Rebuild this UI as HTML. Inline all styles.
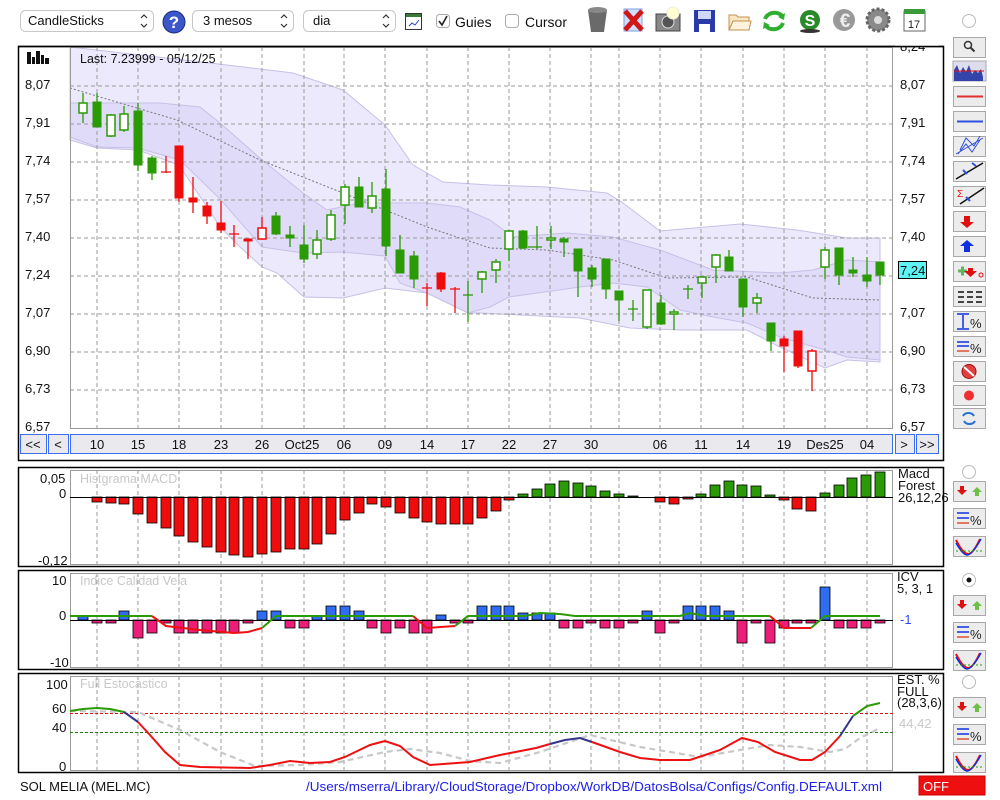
<!DOCTYPE html>
<html><head><meta charset="utf-8"><style>
html,body{margin:0;padding:0;background:#fff;width:1000px;height:800px;overflow:hidden}
svg{display:block;font-family:"Liberation Sans",Arial,sans-serif}
.gr{stroke:#9a9a9a;stroke-dasharray:4,3;stroke-width:1;fill:none}
.g{fill:#2a9a05;stroke:#2a9a05;stroke-width:1}
.h{fill:#fff;stroke:#2a9a05;stroke-width:1.5}
.r{fill:#ee0c0c;stroke:#ee0c0c;stroke-width:1}
.rh{fill:#fff;stroke:#ee0c0c;stroke-width:1.5}
.btn{fill:#ececec;stroke:#a8a8a8;stroke-width:1}
.ax{font-size:13px;fill:#111}
</style></head><body>
<svg width="1000" height="800" viewBox="0 0 1000 800" xmlns="http://www.w3.org/2000/svg">
<!-- MAIN PANEL -->
<rect x="18.5" y="46.5" width="925" height="414" fill="#fff" stroke="#000" stroke-width="1.5"/>
<polygon points="70,47 227,65 293,73 343,90 385,125 413,165 443,182 490,185 547,187 607,193 623,203 660,231 740,224 797,230 847,238 880,238 880,362 847,360 825,368 780,347 747,330 680,330 630,328 580,318 480,313 468,313 427,293 385,288 343,298 304,297 277,273 262,267 240,247 221,228 179,165 138,150 97,148 70,140" fill="#ece9fc" stroke="#c6c0e6"/>
<polygon points="70,103 160,103 200,107 220,123 262,160 303,193 327,210 360,203 427,203 460,207 490,220 513,237 567,233 613,237 660,250 713,270 780,273 813,270 847,260 880,262 880,360 847,357 825,350 780,337 747,323 713,317 680,310 647,287 613,283 580,287 509,297 490,307 468,313 427,293 400,283 385,256 343,252 303,253 262,247 221,200 180,160 138,148 97,147 70,137" fill="#e1dbfa" stroke="#c6c0e6"/>
<polyline points="70,88 177,120 260,160 343,193 427,227 490,248 547,250 613,260 667,278 747,277 797,293 813,298 880,300" fill="none" stroke="#777" stroke-dasharray="2,2"/>
<g class="gr">
<path d="M70 86H893M70 124H893M70 162H893M70 200H893M70 238H893M70 276H893M70 314H893M70 352H893M70 390H893"/>
<path d="M97 47V428M138 47V428M179 47V428M221 47V428M262 47V428M304 47V428M344 47V428M385 47V428M427 47V428M468 47V428M509 47V428M550 47V428M591 47V428M619 47V428M660 47V428M701 47V428M743 47V428M784 47V428M825 47V428M867 47V428"/>
</g>
<rect x="70.5" y="47.5" width="822" height="381" fill="none" stroke="#9a9a9a"/>
<g stroke="#2a9a05" stroke-width="1.3">
<path d="M83 93V123M97 93V127M111 114V137M124 106V132M138 103V171M152 156V180M276 212V235M290 226V247M304 225V263M317 230V259M331 210V241M345 184V224M359 177V207M372 182V213M386 169V256M400 235V273M414 251V288M468 281V322M482 271V293M496 259V283M509 230V261M523 230V249M537 226V249M551 226V249M564 237V257M578 249V297M592 265V287M606 259V299M619 291V321M633 300V321M647 290V329M661 295V325M674 309V330M688 285V299M702 277V298M716 254V283M729 250V271M743 279V317M757 293V313M771 323V351M825 247V279M839 248V285M853 257V277M867 257V287M880 262V285"/>
<path d="M463 295H473M528 247H542M628 309H638M683 289H693"/>
</g>
<g stroke="#ee0c0c" stroke-width="1.3">
<path d="M166 156V173M179 146V202M193 177V213M207 202V224M221 201V233M234 225V247M248 239V259M262 217V239M427 283V306M441 272V292M455 287V313M784 336V372M798 331V368M812 349V391"/>
<path d="M161 172H171M229 234H239M422 288H432M450 289H460"/>
</g>
<rect class="h" x="79" y="103" width="8" height="10"/>
<rect class="g" x="93" y="102" width="8" height="25"/>
<rect class="h" x="107" y="115" width="8" height="21"/>
<rect class="h" x="120" y="114" width="8" height="16"/>
<rect class="g" x="134" y="111" width="8" height="54"/>
<rect class="g" x="148" y="158" width="8" height="15"/>
<rect class="r" x="175" y="146" width="8" height="52"/>
<rect class="r" x="189" y="198" width="8" height="4"/>
<rect class="r" x="203" y="206" width="8" height="10"/>
<rect class="r" x="217" y="223" width="8" height="7"/>
<rect class="r" x="244" y="239" width="8" height="2"/>
<rect class="rh" x="258" y="228" width="8" height="11"/>
<rect class="g" x="272" y="216" width="8" height="18"/>
<rect class="g" x="286" y="235" width="8" height="3"/>
<rect class="g" x="300" y="245" width="8" height="14"/>
<rect class="h" x="313" y="240" width="8" height="14"/>
<rect class="h" x="327" y="215" width="8" height="24"/>
<rect class="h" x="341" y="187" width="8" height="18"/>
<rect class="g" x="355" y="187" width="8" height="20"/>
<rect class="h" x="368" y="196" width="8" height="12"/>
<rect class="g" x="382" y="189" width="8" height="57"/>
<rect class="g" x="396" y="250" width="8" height="23"/>
<rect class="g" x="410" y="256" width="8" height="23"/>
<rect class="r" x="437" y="273" width="8" height="16"/>
<rect class="h" x="478" y="272" width="8" height="7"/>
<rect class="h" x="492" y="262" width="8" height="8"/>
<rect class="h" x="505" y="231" width="8" height="18"/>
<rect class="g" x="519" y="231" width="8" height="17"/>
<rect class="h" x="547" y="238" width="8" height="2"/>
<rect class="g" x="560" y="239" width="8" height="3"/>
<rect class="g" x="574" y="249" width="8" height="22"/>
<rect class="g" x="588" y="268" width="8" height="11"/>
<rect class="g" x="602" y="259" width="8" height="30"/>
<rect class="g" x="615" y="291" width="8" height="9"/>
<rect class="h" x="643" y="290" width="8" height="37"/>
<rect class="g" x="657" y="303" width="8" height="21"/>
<rect class="h" x="670" y="312" width="8" height="2"/>
<rect class="h" x="698" y="277" width="8" height="6"/>
<rect class="h" x="712" y="255" width="8" height="12"/>
<rect class="g" x="725" y="257" width="8" height="14"/>
<rect class="g" x="739" y="279" width="8" height="28"/>
<rect class="h" x="753" y="298" width="8" height="5"/>
<rect class="g" x="767" y="323" width="8" height="18"/>
<rect class="r" x="780" y="339" width="8" height="7"/>
<rect class="r" x="794" y="331" width="8" height="35"/>
<rect class="rh" x="808" y="351" width="8" height="20"/>
<rect class="h" x="821" y="250" width="8" height="17"/>
<rect class="g" x="835" y="248" width="8" height="27"/>
<rect class="g" x="849" y="270" width="8" height="3"/>
<rect class="g" x="863" y="275" width="8" height="6"/>
<rect class="g" x="876" y="262" width="8" height="13"/>
<g fill="#111"><rect x="27" y="52" width="4" height="12"/><rect x="32" y="57" width="3" height="7"/><rect x="36" y="51" width="4" height="13"/><rect x="41" y="55" width="3" height="9"/><rect x="45" y="58" width="4" height="6"/></g>
<text x="80" y="63" font-size="12.5" fill="#111">Last: 7.23999 - 05/12/25</text>
<g class="ax">
<text x="25" y="89">8,07</text><text x="25" y="127">7,91</text><text x="25" y="165">7,74</text><text x="25" y="203">7,57</text><text x="25" y="241">7,40</text><text x="25" y="279">7,24</text><text x="25" y="317">7,07</text><text x="25" y="355">6,90</text><text x="25" y="393">6,73</text><text x="25" y="431">6,57</text>
<text x="900" y="51">8,24</text><text x="900" y="89">8,07</text><text x="900" y="127">7,91</text><text x="900" y="165">7,74</text><text x="900" y="203">7,57</text><text x="900" y="241">7,40</text><text x="900" y="317">7,07</text><text x="900" y="355">6,90</text><text x="900" y="393">6,73</text><text x="900" y="431">6,57</text>
</g>
<rect x="895" y="33" width="44" height="13" fill="#fff"/>
<line x1="18" y1="46.5" x2="944" y2="46.5" stroke="#000" stroke-width="1.5"/>
<rect x="898.5" y="261.5" width="28" height="17" fill="#5ff4f4" stroke="#000"/>
<text x="900" y="275" class="ax">7,24</text>
<g fill="#e9e9ee" stroke="#3c6cf0">
<rect x="20.5" y="434.5" width="26" height="19"/><rect x="48.5" y="434.5" width="20" height="19"/><rect x="70.5" y="434.5" width="822" height="19"/><rect x="895.5" y="434.5" width="19" height="19"/><rect x="916.5" y="434.5" width="22" height="19"/>
</g>
<g font-size="13" fill="#111" text-anchor="middle">
<text x="33" y="449">&lt;&lt;</text><text x="58" y="449">&lt;</text><text x="904" y="449">&gt;</text><text x="927" y="449">&gt;&gt;</text>
<text x="97" y="449">10</text><text x="138" y="449">15</text><text x="179" y="449">18</text><text x="221" y="449">23</text><text x="262" y="449">26</text><text x="302" y="449">Oct25</text><text x="344" y="449">06</text><text x="385" y="449">09</text><text x="427" y="449">14</text><text x="468" y="449">17</text><text x="509" y="449">22</text><text x="550" y="449">27</text><text x="591" y="449">30</text><text x="660" y="449">06</text><text x="701" y="449">11</text><text x="743" y="449">14</text><text x="784" y="449">19</text><text x="825" y="449">Des25</text><text x="867" y="449">04</text>
</g>

<!-- TOOLBAR -->
<g font-size="13">
<rect x="20.5" y="10.5" width="133" height="21" rx="5" fill="#fff" stroke="#c8c8c8"/>
<text x="28" y="25" fill="#111">CandleSticks</text>
<path d="M141 18 l3 -3 l3 3 M141 24 l3 3 l3 -3" stroke="#333" fill="none" stroke-width="1.2"/>
<circle cx="174" cy="22" r="11" fill="#3a56c8" stroke="#1b2a80"/>
<text x="174" y="28" text-anchor="middle" font-size="17" font-weight="bold" fill="#fff">?</text>
<rect x="192.5" y="10.5" width="101" height="21" rx="5" fill="#fff" stroke="#c8c8c8"/>
<text x="203" y="25" fill="#111">3 mesos</text>
<path d="M281 18 l3 -3 l3 3 M281 24 l3 3 l3 -3" stroke="#333" fill="none" stroke-width="1.2"/>
<rect x="303.5" y="10.5" width="92" height="21" rx="5" fill="#fff" stroke="#c8c8c8"/>
<text x="313" y="25" fill="#111">dia</text>
<path d="M383 18 l3 -3 l3 3 M383 24 l3 3 l3 -3" stroke="#333" fill="none" stroke-width="1.2"/>
<rect x="405.5" y="13.5" width="16" height="16" fill="#fff" stroke="#333"/>
<rect x="406" y="14" width="15" height="3" fill="#3a7a3a"/>
<path d="M409 26 l3 -3 l3 2 l4 -5" stroke="#2244cc" fill="none"/>
<rect x="436.5" y="14.5" width="13" height="13" rx="3" fill="#fff" stroke="#aaa"/>
<path d="M439 21 l3 4 l5 -9" stroke="#222" fill="none" stroke-width="1.6"/>
<text x="455" y="27" fill="#111" font-size="14">Guies</text>
<rect x="505.5" y="14.5" width="13" height="13" rx="3" fill="#fff" stroke="#aaa"/>
<text x="525" y="27" fill="#111" font-size="14">Cursor</text>
</g>
<path d="M588 10 h19 l-3 22 h-13 z" fill="#6a6a6a"/><ellipse cx="597.5" cy="10" rx="9.5" ry="3" fill="#888"/>
<rect x="624" y="9" width="18" height="22" fill="#cfe0ff" stroke="#7ea0e0"/>
<path d="M625 11 l17 19 M642 11 l-17 19" stroke="#d01818" stroke-width="5"/>
<rect x="656" y="14" width="24" height="17" fill="#888" stroke="#444"/><circle cx="668" cy="22" r="6" fill="#555" stroke="#ddd"/><circle cx="673" cy="13" r="6" fill="#ffffd0" stroke="#eed"/>
<rect x="694" y="10" width="21" height="22" fill="#2a3aa8"/><rect x="698" y="11" width="13" height="8" fill="#cfd8ff"/><rect x="699" y="24" width="11" height="8" fill="#fff"/>
<path d="M729 15 h7 l2 2 h11 v13 h-20 z" fill="#fbe6c4" stroke="#c09050"/><path d="M729 30 l4 -9 h18 l-2 9 z" fill="#fff3dd" stroke="#c09050"/>
<path d="M765 19 a10 9 0 0 1 18 -2 M783 23 a10 9 0 0 1 -18 2" stroke="#2fae2f" stroke-width="4" fill="none"/>
<path d="M785 13 l-1 7 l-6 -3 z M763 29 l1 -7 l6 3 z" fill="#2fae2f"/>
<circle cx="810" cy="20" r="10" fill="#2a8a2a"/><text x="810" y="26" text-anchor="middle" font-size="16" font-weight="bold" fill="#fff">S</text><ellipse cx="810" cy="31" rx="10" ry="2" fill="#333"/>
<circle cx="844" cy="20" r="11" fill="#999"/><text x="845" y="27" text-anchor="middle" font-size="19" font-weight="bold" fill="#eee">€</text>
<circle cx="878" cy="20" r="11" fill="#8a8a8a" stroke="#666" stroke-width="3" stroke-dasharray="3,2"/><circle cx="878" cy="20" r="4" fill="#ddd"/>
<rect x="904" y="11" width="21" height="20" fill="#fff" stroke="#666"/><rect x="904" y="9" width="21" height="5" fill="#3a9a3a"/>
<text x="914" y="28" text-anchor="middle" font-size="11" fill="#222">17</text>
<circle cx="969" cy="21" r="6.5" fill="#fff" stroke="#bbb"/>

<!-- MACD PANEL -->
<rect x="18.5" y="467.5" width="925" height="99" fill="#fff" stroke="#000" stroke-width="1.5"/>
<g class="gr"><path d="M97 470V565M138 470V565M179 470V565M221 470V565M262 470V565M304 470V565M344 470V565M385 470V565M427 470V565M468 470V565M509 470V565M550 470V565M591 470V565M619 470V565M660 470V565M701 470V565M743 470V565M784 470V565M825 470V565M867 470V565"/></g>
<rect x="70.5" y="470.5" width="822" height="94" fill="none" stroke="#9a9a9a"/>
<text x="80" y="483" font-size="12.5" fill="#c8c8c8">Histgrama MACD</text>
<g fill="#ee0c0c" stroke="#000" stroke-width="0.8">
<rect x="92" y="497" width="10" height="5"/><rect x="106" y="497" width="10" height="6"/><rect x="119" y="497" width="10" height="7"/><rect x="133" y="497" width="10" height="17"/><rect x="147" y="497" width="10" height="26"/><rect x="161" y="497" width="10" height="31"/><rect x="174" y="497" width="10" height="39"/><rect x="188" y="497" width="10" height="45"/><rect x="202" y="497" width="10" height="50"/><rect x="216" y="497" width="10" height="55"/><rect x="229" y="497" width="10" height="58"/><rect x="243" y="497" width="10" height="60"/><rect x="257" y="497" width="10" height="57"/><rect x="271" y="497" width="10" height="55"/><rect x="285" y="497" width="10" height="52"/><rect x="299" y="497" width="10" height="52"/><rect x="312" y="497" width="10" height="47"/><rect x="326" y="497" width="10" height="37"/><rect x="340" y="497" width="10" height="23"/><rect x="354" y="497" width="10" height="16"/><rect x="367" y="497" width="10" height="7"/><rect x="381" y="497" width="10" height="10"/><rect x="395" y="497" width="10" height="16"/><rect x="409" y="497" width="10" height="21"/><rect x="422" y="497" width="10" height="25"/><rect x="436" y="497" width="10" height="27"/><rect x="450" y="497" width="10" height="27"/><rect x="463" y="497" width="10" height="27"/><rect x="477" y="497" width="10" height="21"/><rect x="491" y="497" width="10" height="14"/><rect x="504" y="497" width="10" height="3"/>
<rect x="655" y="497" width="10" height="5"/><rect x="669" y="497" width="10" height="7"/><rect x="683" y="497" width="10" height="2"/><rect x="779" y="497" width="10" height="3"/><rect x="792" y="497" width="10" height="12"/><rect x="806" y="497" width="10" height="14"/>
</g>
<g fill="#2a9a05" stroke="#000" stroke-width="0.8">
<rect x="518" y="494" width="10" height="3"/><rect x="532" y="489" width="10" height="8"/><rect x="545" y="484" width="10" height="13"/><rect x="559" y="481" width="10" height="16"/><rect x="573" y="483" width="10" height="14"/><rect x="586" y="486" width="10" height="11"/><rect x="600" y="491" width="10" height="6"/><rect x="614" y="494" width="10" height="3"/><rect x="628" y="496" width="10" height="1"/>
<rect x="696" y="494" width="10" height="3"/><rect x="710" y="485" width="10" height="12"/><rect x="724" y="481" width="10" height="16"/><rect x="737" y="485" width="10" height="12"/><rect x="751" y="486" width="10" height="11"/><rect x="765" y="495" width="10" height="2"/>
<rect x="820" y="493" width="10" height="4"/><rect x="834" y="485" width="10" height="12"/><rect x="847" y="478" width="10" height="19"/><rect x="861" y="475" width="10" height="22"/><rect x="875" y="472" width="10" height="25"/>
</g>
<line x1="70" y1="497.5" x2="893" y2="497.5" stroke="#000"/>
<g class="ax"><text x="40" y="483">0,05</text><text x="59" y="498">0</text><text x="38" y="565">-0,12</text>
<text x="898" y="478">Macd</text><text x="898" y="490">Forest</text><text x="898" y="502">26,12,26</text></g>

<!-- ICV PANEL -->
<rect x="18.5" y="570.5" width="925" height="99" fill="#fff" stroke="#000" stroke-width="1.5"/>
<g class="gr"><path d="M97 573V668M138 573V668M179 573V668M221 573V668M262 573V668M304 573V668M344 573V668M385 573V668M427 573V668M468 573V668M509 573V668M550 573V668M591 573V668M619 573V668M660 573V668M701 573V668M743 573V668M784 573V668M825 573V668M867 573V668"/></g>
<rect x="70.5" y="573.5" width="822" height="94" fill="none" stroke="#9a9a9a"/>
<text x="80" y="585" font-size="12.5" fill="#c8c8c8">Indice Calidad Vela</text>
<g fill="#2f6cf0" stroke="#000" stroke-width="0.8">
<rect x="78" y="616" width="10" height="4"/><rect x="119" y="611" width="10" height="9"/><rect x="257" y="611" width="10" height="9"/><rect x="271" y="611" width="10" height="9"/><rect x="312" y="616" width="10" height="4"/><rect x="326" y="606" width="10" height="14"/><rect x="340" y="606" width="10" height="14"/><rect x="354" y="611" width="10" height="9"/><rect x="436" y="615" width="10" height="5"/><rect x="477" y="606" width="10" height="14"/><rect x="491" y="606" width="10" height="14"/><rect x="504" y="606" width="10" height="14"/><rect x="518" y="613" width="10" height="7"/><rect x="532" y="613" width="10" height="7"/><rect x="545" y="613" width="10" height="7"/><rect x="642" y="611" width="10" height="9"/><rect x="683" y="606" width="10" height="14"/><rect x="696" y="606" width="10" height="14"/><rect x="710" y="606" width="10" height="14"/><rect x="724" y="611" width="10" height="9"/><rect x="820" y="587" width="10" height="33"/>
</g>
<g fill="#ec1e78" stroke="#000" stroke-width="0.8">
<rect x="92" y="620" width="10" height="3"/><rect x="106" y="620" width="10" height="3"/><rect x="133" y="620" width="10" height="18"/><rect x="147" y="620" width="10" height="13"/><rect x="161" y="620" width="10" height="3"/><rect x="174" y="620" width="10" height="13"/><rect x="188" y="620" width="10" height="13"/><rect x="202" y="620" width="10" height="13"/><rect x="216" y="620" width="10" height="13"/><rect x="229" y="620" width="10" height="13"/><rect x="243" y="620" width="10" height="3"/><rect x="285" y="620" width="10" height="8"/><rect x="299" y="620" width="10" height="8"/><rect x="367" y="620" width="10" height="8"/><rect x="381" y="620" width="10" height="13"/><rect x="395" y="620" width="10" height="8"/><rect x="409" y="620" width="10" height="13"/><rect x="422" y="620" width="10" height="13"/><rect x="450" y="620" width="10" height="3"/><rect x="463" y="620" width="10" height="3"/>
<rect x="559" y="620" width="10" height="8"/><rect x="573" y="620" width="10" height="8"/><rect x="586" y="620" width="10" height="3"/><rect x="600" y="620" width="10" height="8"/><rect x="614" y="620" width="10" height="8"/><rect x="628" y="620" width="10" height="3"/><rect x="655" y="620" width="10" height="13"/><rect x="669" y="620" width="10" height="3"/><rect x="737" y="620" width="10" height="23"/><rect x="751" y="620" width="10" height="3"/><rect x="765" y="620" width="10" height="23"/><rect x="779" y="620" width="10" height="8"/><rect x="792" y="620" width="10" height="3"/><rect x="806" y="620" width="10" height="3"/><rect x="834" y="620" width="10" height="8"/><rect x="847" y="620" width="10" height="8"/><rect x="861" y="620" width="10" height="8"/><rect x="875" y="620" width="10" height="3"/>
</g>
<line x1="70" y1="620.5" x2="893" y2="620.5" stroke="#000"/>
<polyline points="70,616 152,616" fill="none" stroke="#2a9a05" stroke-width="2"/>
<polyline points="152,616 166,626 200,630 234,633 248,632 262,628" fill="none" stroke="#ee1010" stroke-width="2"/>
<polyline points="262,628 276,616 413,616" fill="none" stroke="#2a9a05" stroke-width="2"/>
<polyline points="413,616 427,628 455,626" fill="none" stroke="#ee1010" stroke-width="2"/>
<polyline points="455,626 468,616 525,616 540,613 560,614 575,616 680,616 690,613 705,616 770,616" fill="none" stroke="#2a9a05" stroke-width="2"/>
<polyline points="770,616 784,628 811,628" fill="none" stroke="#ee1010" stroke-width="2"/>
<polyline points="811,628 825,616 880,616" fill="none" stroke="#2a9a05" stroke-width="2"/>
<g class="ax"><text x="52" y="585">10</text><text x="59" y="620">0</text><text x="50" y="667">-10</text>
<text x="897" y="581">ICV</text><text x="897" y="593">5, 3, 1</text></g>
<text x="900" y="624" font-size="13" fill="#2f4cf0">-1</text>

<!-- STOCH PANEL -->
<rect x="18.5" y="673.5" width="925" height="99" fill="#fff" stroke="#000" stroke-width="1.5"/>
<g class="gr"><path d="M97 676V771M138 676V771M179 676V771M221 676V771M262 676V771M304 676V771M344 676V771M385 676V771M427 676V771M468 676V771M509 676V771M550 676V771M591 676V771M619 676V771M660 676V771M701 676V771M743 676V771M784 676V771M825 676V771M867 676V771"/></g>
<rect x="70.5" y="676.5" width="822" height="94" fill="none" stroke="#9a9a9a"/>
<line x1="70" y1="713.5" x2="893" y2="713.5" stroke="#e01010" stroke-dasharray="3,2"/>
<line x1="70" y1="732.5" x2="893" y2="732.5" stroke="#207a10" stroke-dasharray="3,2"/>
<text x="80" y="688" font-size="12.5" fill="#c8c8c8">Full Estocastico</text>
<polyline points="70,711 138,712 180,730 220,752 255,766 300,765 340,762 385,752 410,749 440,753 470,761 500,763 540,752 590,735 640,747 700,757 740,750 770,745 800,747 830,752 845,749 860,738 880,728" fill="none" stroke="#c8c8c8" stroke-width="2.2" stroke-dasharray="6,4"/>
<polyline points="70,711 83,709 97,708 110,709 124,712" fill="none" stroke="#2a9a05" stroke-width="2"/>
<polyline points="124,712 138,722" fill="none" stroke="#33338a" stroke-width="2"/>
<polyline points="138,722 150,735 165,752 180,765 200,767 250,768 270,765 290,761 310,763 330,762 345,757 370,745 385,741 400,746 413,757 430,765 470,762 500,755 536,748 550,744" fill="none" stroke="#ee1010" stroke-width="2"/>
<polyline points="550,744 565,740 580,738 592,742" fill="none" stroke="#33338a" stroke-width="2"/>
<polyline points="592,742 620,752 640,758 660,760 690,760 720,750 742,738 758,742 775,752 800,760 812,760 825,752 840,736" fill="none" stroke="#ee1010" stroke-width="2"/>
<polyline points="840,736 853,716" fill="none" stroke="#33338a" stroke-width="2"/>
<polyline points="853,716 867,706 880,703" fill="none" stroke="#2a9a05" stroke-width="2"/>
<g class="ax"><text x="46" y="689">100</text><text x="52" y="713">60</text><text x="52" y="732">40</text><text x="59" y="771">0</text>
<text x="897" y="684">EST. %</text><text x="897" y="696">FULL</text><text x="897" y="707">(28,3,6)</text></g>
<text x="899" y="728" font-size="13" fill="#c8c8c8">44,42</text>

<!-- RIGHT BUTTONS -->
<g>
<rect class="btn" x="953.5" y="37.5" width="32" height="20"/><circle cx="968" cy="45" r="3.5" fill="none" stroke="#333" stroke-width="1.5"/><path d="M970.5 47.5 l4 4" stroke="#333" stroke-width="2"/>
<rect x="953" y="61" width="33" height="20" fill="#dde" stroke="#aaa"/><path d="M954 81 V70 l3 -5 l3 8 l3 -6 l3 5 l3 -7 l3 9 l3 -4 l3 3 l3 -4 l2 8 V81z" fill="#3344aa"/><path d="M954 71 h30" stroke="#e01010"/>
<rect class="btn" x="953.5" y="86.5" width="32" height="20"/><path d="M957 96.5h26" stroke="#e03030" stroke-width="2"/>
<rect class="btn" x="953.5" y="111.5" width="32" height="20"/><path d="M957 121.5h26" stroke="#3050e0" stroke-width="2"/>
<rect class="btn" x="953.5" y="136.5" width="32" height="20"/><path d="M956 154 l27 -16 M960 150 l6 -12 l8 8 l6 -10 M958 154 l8 -10 l6 8 l8 -12" stroke="#3050e0" fill="none"/>
<rect class="btn" x="953.5" y="161.5" width="32" height="20"/><path d="M956 179 l27 -16" stroke="#111" stroke-width="1.5"/><path d="M963 170 l4 4 M976 166 l-4 -3" stroke="#3050e0" stroke-width="2"/>
<rect class="btn" x="953.5" y="186.5" width="32" height="20"/><path d="M960 204 l24 -16" stroke="#111" stroke-width="1.5"/><text x="957" y="197" font-size="10" fill="#e01010">Σ</text><path d="M966 197 l4 4" stroke="#3050e0" stroke-width="2"/>
<rect class="btn" x="953.5" y="211.5" width="32" height="20"/><path d="M964 216h6v6h4l-7 6l-7 -6h4z" fill="#e01010"/>
<rect class="btn" x="953.5" y="236.5" width="32" height="20"/><path d="M964 252h6v-6h4l-7 -6l-7 6h4z" fill="#1030e0"/>
<rect class="btn" x="953.5" y="261.5" width="32" height="20"/><path d="M958 271h9M962.5 266.5v9" stroke="#5cb85c" stroke-width="3"/><path d="M968 268h5v3h4l-6.5 6l-6.5 -6h4z" fill="#e01010"/><circle cx="981" cy="275" r="2" fill="none" stroke="#e01010"/>
<rect class="btn" x="953.5" y="286.5" width="32" height="20"/><path d="M958 292h6m3 0h6m3 0h6M958 297h6m3 0h6m3 0h6M958 302h6m3 0h6m3 0h6" stroke="#444" stroke-width="2"/>
<rect class="btn" x="953.5" y="311.5" width="32" height="20"/><path d="M957 314h12M957 329h12M963 315v13" stroke="#1030e0" stroke-width="1.5"/><text x="970" y="328" font-size="13" fill="#222">%</text>
<rect class="btn" x="953.5" y="336.5" width="32" height="20"/><path d="M957 342h12M957 346h12" stroke="#1030e0" stroke-width="1.5"/><path d="M957 351h12" stroke="#e05030" stroke-width="1.5"/><text x="970" y="353" font-size="13" fill="#222">%</text>
<rect class="btn" x="953.5" y="361.5" width="32" height="20"/><circle cx="969" cy="371.5" r="7" fill="#e04040" stroke="#a01010"/><path d="M964 367 l10 9" stroke="#fff" stroke-width="2"/>
<rect class="btn" x="953.5" y="385.5" width="32" height="20"/><circle cx="969" cy="395.5" r="5" fill="#f03030"/>
<rect class="btn" x="953.5" y="408.5" width="32" height="20"/><path d="M963 416 a6 5 0 0 1 11 0 M975 421 a6 5 0 0 1 -11 0" stroke="#2a70d0" stroke-width="2" fill="none"/>
</g>
<g>
<circle cx="969" cy="472" r="6.5" fill="#fff" stroke="#bbb"/>
<circle cx="969" cy="580" r="6.5" fill="#fff" stroke="#bbb"/><circle cx="969" cy="580" r="2.5" fill="#111"/>
<circle cx="969" cy="682" r="6.5" fill="#fff" stroke="#bbb"/>
</g>
<g id="bset">
<rect class="btn" x="953.5" y="481.5" width="32" height="20"/><path d="M960 486h4v4h3l-5 5l-5 -5h3z" fill="#e01010"/><path d="M975 496h4v-4h3l-5 -5l-5 5h3z" fill="#6cc04a"/>
<rect class="btn" x="953.5" y="508.5" width="32" height="20"/><path d="M957 513h12M957 518h12" stroke="#1030e0" stroke-width="1.5"/><path d="M957 523h12" stroke="#e05030" stroke-width="1.5"/><text x="970" y="525" font-size="13" fill="#222">%</text>
<rect class="btn" x="953.5" y="536.5" width="32" height="20"/><path d="M956 540 q7 14 12 14 q5 0 12 -15" stroke="#e01010" stroke-width="2" fill="none"/><path d="M956 543 q7 12 11 12 q5 0 14 -16" stroke="#1030e0" stroke-width="1.5" fill="none"/><path d="M956 551h26" stroke="#2a9a05" stroke-dasharray="2,2"/>
</g>
<use href="#bset" y="114"/>
<use href="#bset" y="216"/>

<!-- FOOTER -->
<text x="20" y="791" font-size="13" fill="#111">SOL MELIA (MEL.MC)</text>
<text x="306" y="791" font-size="13" fill="#2020e8" textLength="576" lengthAdjust="spacingAndGlyphs">/Users/mserra/Library/CloudStorage/Dropbox/WorkDB/DatosBolsa/Configs/Config.DEFAULT.xml</text>
<rect x="919" y="776" width="66" height="19" fill="#ee1010" stroke="#c00"/>
<text x="923" y="791" font-size="13" fill="#fff">OFF</text>
</svg>
</body></html>
